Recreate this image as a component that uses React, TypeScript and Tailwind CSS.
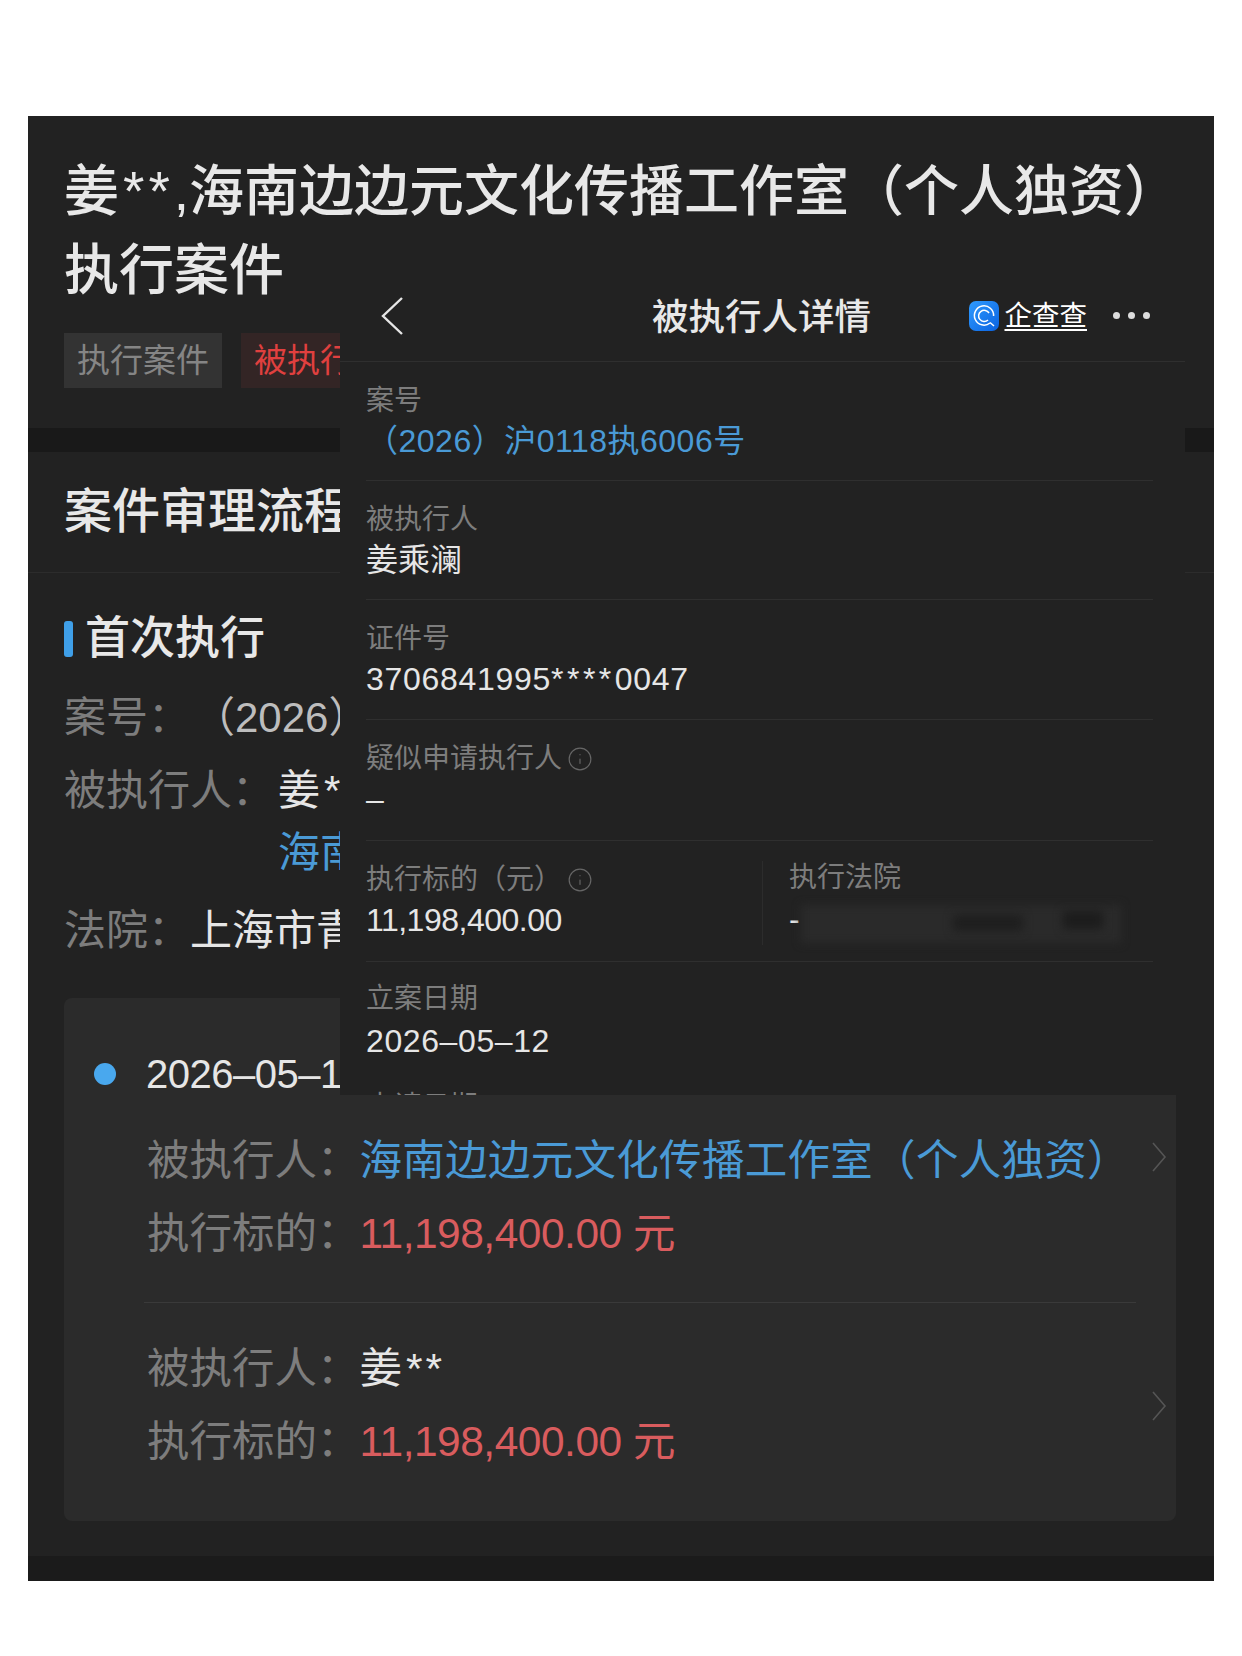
import { Info } from "lucide-react";

const label = "text-[#7d7d7d]";

function Chevron() {
  return (
    <svg width="18" height="34" viewBox="0 0 18 34" fill="none" className="shrink-0 text-[#555]">
      <polyline points="3,3 15,17 3,31" stroke="currentColor" strokeWidth="1.6" />
    </svg>
  );
}

function QccLogo() {
  return (
    <svg width="30" height="30" viewBox="0 0 30 30" className="shrink-0">
      <defs>
        <linearGradient id="qcc" x1="0" y1="0" x2="1" y2="1">
          <stop offset="0" stopColor="#2f9bff" />
          <stop offset="1" stopColor="#0a62e0" />
        </linearGradient>
      </defs>
      <rect width="30" height="30" rx="7" fill="url(#qcc)" />
      <path d="M21 22A9.6 9.6 0 1 1 24.6 15" stroke="#fff" strokeWidth="1.5" fill="none" />
      <path d="M19 19A5.6 5.6 0 1 1 20 12" stroke="#fff" strokeWidth="1.5" fill="none" />
      <path d="M21 21.5L25 25" stroke="#fff" strokeWidth="1.5" fill="none" />
    </svg>
  );
}

function DetailRow({ title, children, info, className }: { title: string; children: React.ReactNode; info?: boolean; className: string }) {
  return (
    <div className={`ml-[26px] mr-[32px] border-b border-[#2f2f2f] pt-[21px] ${className}`}>
      <div className={`flex items-center gap-[5px] text-[28px] leading-[36px] ${label}`}>
        {title}
        {info && <Info size={26} strokeWidth={1.1} className="text-[#666]" />}
      </div>
      <div className="mt-[1px] text-[32px] leading-[42px] text-[#e6e6e6]">{children}</div>
    </div>
  );
}

function DebtorBlock({ name, blue, first }: { name: React.ReactNode; blue?: boolean; first?: boolean }) {
  return (
    <div className={`flex justify-between ${first ? "items-start" : "items-center"}`}>
      <div className="text-[42.5px] leading-[62px] whitespace-nowrap">
        <div className="flex">
          <span className={label}>被执行人：</span>
          <span className={blue ? "text-[#4a9ad6] tracking-[0.3px]" : "text-[#e6e6e6]"}>{name}</span>
        </div>
        <div className="mt-[11px] flex">
          <span className={label}>执行标的：</span>
          <span className="text-[#d95c5e] tracking-[-0.5px]">11,198,400.00 元</span>
        </div>
      </div>
      <div className={first ? "mt-[10px]" : ""}>
        <Chevron />
      </div>
    </div>
  );
}

export default function App() {
  return (
    <div className="relative h-[1656px] w-[1242px] overflow-hidden bg-white pt-[116px] px-[28px] font-['Liberation_Sans','Noto_Sans_CJK_SC',sans-serif]">
      <div className="h-[1464px] bg-[#222222]">
        <div className="px-[36px] pt-[36px]">
          <h1 className="text-[55px] font-medium leading-[79px] text-[#e8e8e8]">
            姜<span className="ml-[4px] tracking-[4px]">**</span>,海南边边元文化传播工作室（个人独资）执行案件
          </h1>
          <div className="mt-[23px] flex gap-[19px]">
            <span className="flex h-[55px] items-center bg-[#333333] px-[13px] text-[33px] text-[#858585]">执行案件</span>
            <span className="flex h-[55px] items-center bg-[#332525] px-[13px] text-[33px] text-[#e0403f]">被执行人</span>
          </div>
        </div>

        <div className="mt-[40px] h-[24px] bg-[#191919]" />

        <div className="flex h-[121px] items-center border-b border-[#2c2c2c] px-[36px] text-[48px] font-medium text-[#e8e8e8]">
          案件审理流程
        </div>

        <div className="px-[36px]">
          <div className="mt-[36px] flex h-[60px] items-center gap-[12px] text-[45px] font-medium text-[#e8e8e8]">
            <span className="h-[36px] w-[9px] rounded-[3px] bg-[#3f9fe8]" />
            首次执行
          </div>
          <div className="mt-[18px] whitespace-nowrap text-[42px] leading-[62px]">
            <div>
              <span className={label}>案号：</span>
              <span className="ml-[24px] text-[#bdbdbd]">（2026）沪0118执6006号</span>
            </div>
            <div className="mt-[11px] flex">
              <span className={label}>被执行人：</span>
              <div className="ml-[4px]">
                <div className="text-[#e6e6e6]">
                  姜<span className="ml-[4px] tracking-[3px]">**</span>
                </div>
                <div className="text-[#4a9ad6]">海南边边元文化传播工作室（个人独资）</div>
              </div>
            </div>
            <div className="mt-[16px]">
              <span className={label}>法院：</span>
              <span className="text-[#e6e6e6]">上海市青浦区人民法院</span>
            </div>
          </div>

          <div className="mt-[36px] mr-[2px] rounded-[8px] bg-[#2b2b2b] pt-[48px] pb-[48px] pl-[30px] pr-[8px]">
            <div className="flex h-[56px] items-center gap-[30px] text-[40px] tracking-[-0.5px] text-[#e6e6e6]">
              <span className="h-[22px] w-[22px] rounded-full bg-[#49a8ee]" />
              2026–05–12
            </div>
            <div className="mt-[28px] pl-[53px]">
              <DebtorBlock first blue name="海南边边元文化传播工作室（个人独资）" />
              <div className="mr-[32px] -ml-[3px] mt-[37px] mb-[35px] h-px bg-[#3a3a3a]" />
              <DebtorBlock
                name={
                  <>
                    姜<span className="ml-[4px] tracking-[3px]">**</span>
                  </>
                }
              />
            </div>
          </div>
        </div>

        <div className="mt-[35px] h-[25px] bg-[#1b1b1b]" />
      </div>

      {/* screenshot pasted over the page */}
      <div className="absolute left-[340px] top-[270px] h-[825px] w-[845px] overflow-hidden bg-[#222222]">
        <div className="relative flex h-[92px] items-center justify-between border-b border-[#2f2f2f] pl-[40px] pr-[35px]">
          <svg width="24" height="40" viewBox="0 0 24 40" fill="none">
            <polyline points="22,2 3,20 22,38" stroke="#e6e6e6" strokeWidth="2.4" />
          </svg>
          <span className="absolute left-[312px] top-[21px] text-[36.5px] font-medium text-[#e8e8e8]">被执行人详情</span>
          <div className="flex items-center">
            <QccLogo />
            <span className="ml-[6px] text-[27.5px] leading-[34px] text-white underline underline-offset-4">企查查</span>
            <div className="ml-[26px] flex gap-[8px]">
              <span className="h-[7px] w-[7px] rounded-full bg-[#dddddd]" />
              <span className="h-[7px] w-[7px] rounded-full bg-[#dddddd]" />
              <span className="h-[7px] w-[7px] rounded-full bg-[#dddddd]" />
            </div>
          </div>
        </div>

        <DetailRow title="案号" className="h-[119px]">
          <span className="tracking-[0.5px] text-[#4a9ad6]">（2026）沪0118执6006号</span>
        </DetailRow>
        <DetailRow title="被执行人" className="h-[119px]">
          姜乘澜
        </DetailRow>
        <DetailRow title="证件号" className="h-[120px]">
          <span className="tracking-[0.7px]">
            3706841995<span className="tracking-[3.5px]">****</span>0047
          </span>
        </DetailRow>
        <DetailRow title="疑似申请执行人" info className="h-[121px]">
          –
        </DetailRow>
        <div className="ml-[26px] mr-[32px] flex h-[121px] border-b border-[#2f2f2f]">
          <div className="w-[396px] pt-[21px]">
            <div className={`flex items-center gap-[5px] text-[28px] leading-[36px] ${label}`}>
              执行标的（元）
              <Info size={26} strokeWidth={1.1} className="text-[#666]" />
            </div>
            <div className="mt-[1px] text-[32px] leading-[42px] tracking-[-0.5px] text-[#e6e6e6]">11,198,400.00</div>
          </div>
          <div className="relative mt-[20px] mb-[16px] flex-1 border-l border-[#2c2c2c] pl-[26px]">
            <div className={`-mt-[1px] text-[28px] leading-[36px] ${label}`}>执行法院</div>
            <div className="mt-[2px] text-[32px] leading-[42px] text-[#e6e6e6]">-</div>
            <div className="absolute left-[38px] top-[44px] h-[38px] w-[320px] bg-[#2a2a2a] blur-[4px]" />
            <div className="absolute left-[190px] top-[54px] h-[16px] w-[70px] bg-[#1e1e1e] blur-[5px]" />
            <div className="absolute left-[300px] top-[50px] h-[18px] w-[40px] bg-[#1c1c1c] blur-[5px]" />
          </div>
        </div>
        <div className="ml-[26px] mr-[32px] pt-[19px]">
          <div className={`text-[28px] leading-[36px] ${label}`}>立案日期</div>
          <div className="mt-[3px] text-[32px] leading-[42px] tracking-[0.6px] text-[#e6e6e6]">2026–05–12</div>
          <div className={`mt-[27px] text-[28px] leading-[36px] ${label}`}>申请日期</div>
        </div>
      </div>
    </div>
  );
}
